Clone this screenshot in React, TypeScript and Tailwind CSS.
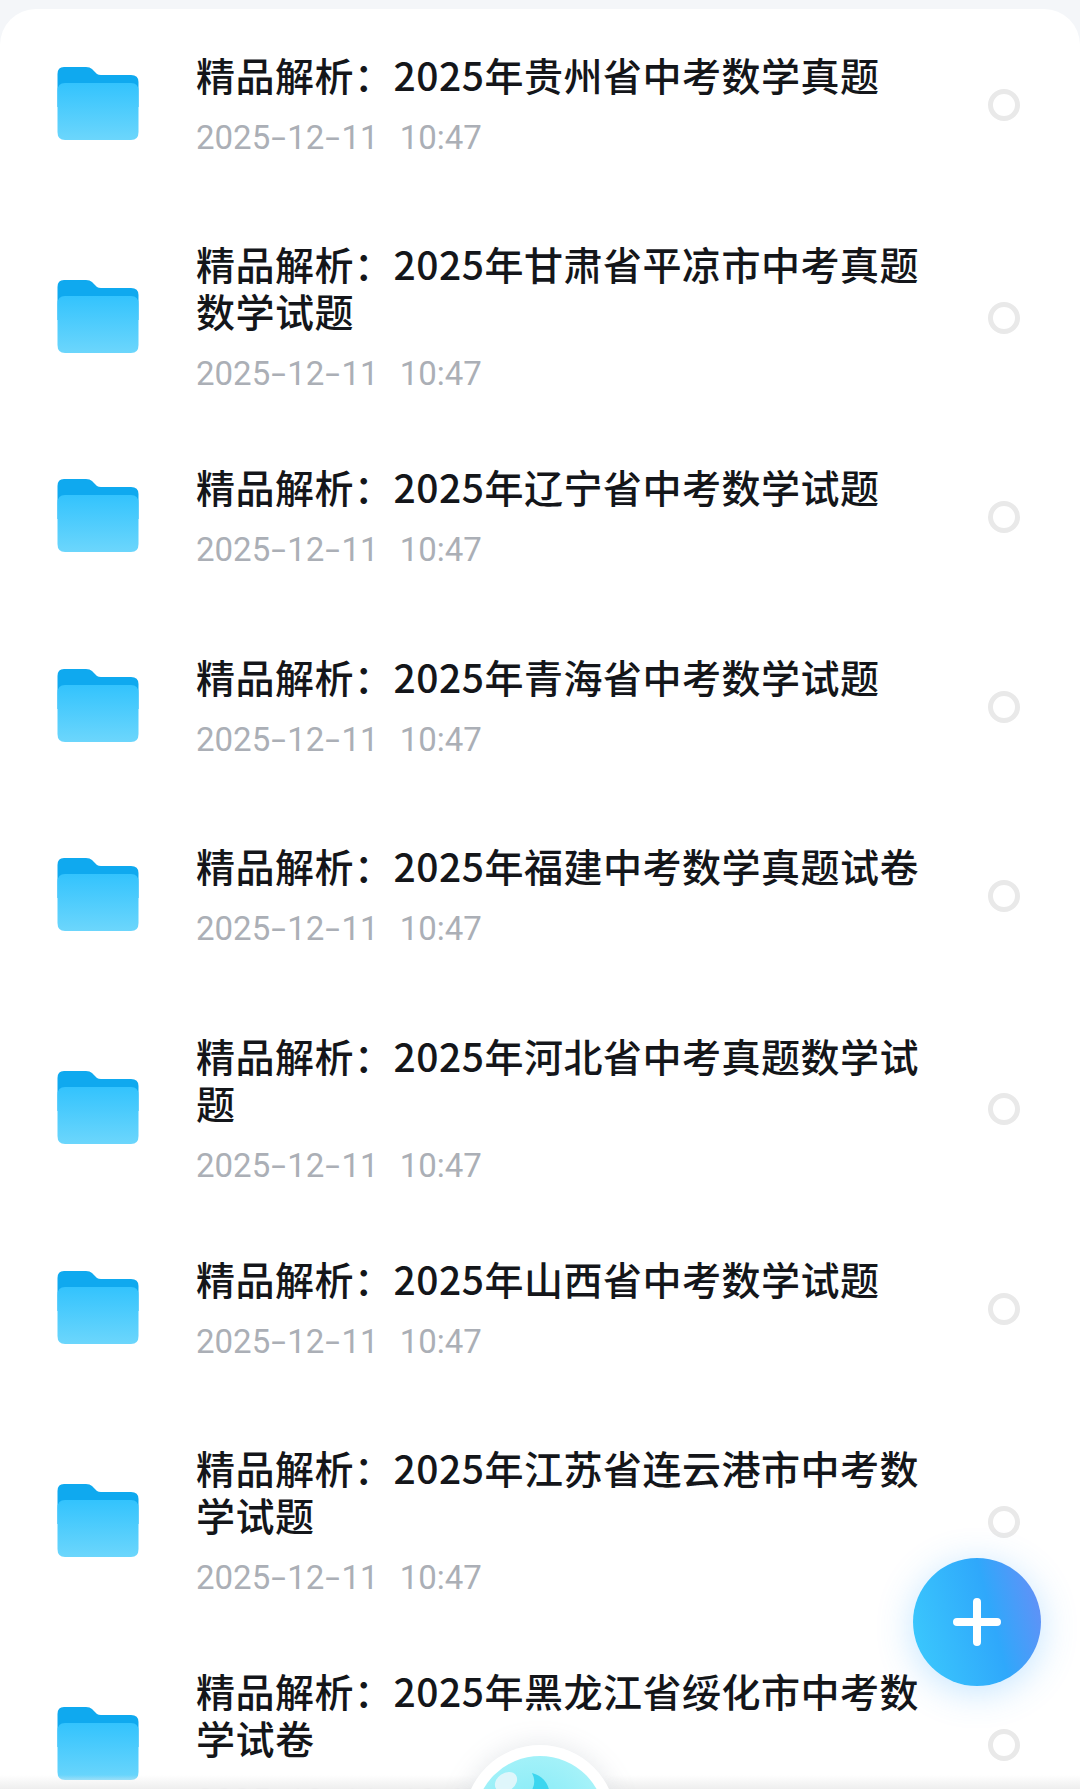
import React from "react";

const font = { fontFamily: '"Noto Sans CJK SC", sans-serif' };

const rows = [
  "精品解析\uFF1A2025年贵州省中考数学真题",
  "精品解析\uFF1A2025年甘肃省平凉市中考真题数学试题",
  "精品解析\uFF1A2025年辽宁省中考数学试题",
  "精品解析\uFF1A2025年青海省中考数学试题",
  "精品解析\uFF1A2025年福建中考数学真题试卷",
  "精品解析\uFF1A2025年河北省中考真题数学试题",
  "精品解析\uFF1A2025年山西省中考数学试题",
  "精品解析\uFF1A2025年江苏省连云港市中考数学试题",
  "精品解析\uFF1A2025年黑龙江省绥化市中考数学试卷",
];

function Folder() {
  return (
    <svg width="82" height="73" viewBox="0 0 82 73" className="mt-[-1px] shrink-0">
      <defs>
        <linearGradient id="folderFront" x1="0" y1="0" x2="0" y2="1">
          <stop offset="0" stopColor="#33c3fd" />
          <stop offset="1" stopColor="#6cd6fc" />
        </linearGradient>
      </defs>
      <path
        d="M7 0H29Q33 0 35 2L40 7Q41.500 8 44 8H74Q81.500 8 81.500 15V40H0.500V7Q0.500 0 7 0Z"
        fill="#0fa9ef"
      />
      <path
        d="M8 16H74Q81.500 16 81.500 24V65Q81.500 73 74 73H8Q0.500 73 0.500 65V24Q0.500 16 8 16Z"
        fill="url(#folderFront)"
      />
    </svg>
  );
}

function Dash() {
  return <span className="mx-[4px] inline-block scale-x-[1.6]">-</span>;
}

function Row({ title }: { title: string }) {
  return (
    <div className="flex min-h-[189.5px] items-start pt-[35.5px] pb-[36.5px] pl-[57px] pr-[60px]">
      <div className="flex w-full items-center">
        <Folder />
        <div className="ml-[57px] w-[730px] shrink-0">
          <div
            lang="zh-CN"
            className="mt-[-1px] text-[39px] font-medium leading-[47px] tracking-[0.5px] text-[#14161a]"
            style={font}
          >
            {title}
          </div>
          <div className="mt-[22px] whitespace-pre font-['Roboto',sans-serif] text-[33px] leading-[36px] text-[#abafb6]">
            2025
            <Dash />
            12
            <Dash />
            11
            <span className="ml-[21px]">10:47</span>
          </div>
        </div>
        <div className="mt-[2px] ml-auto size-[32px] shrink-0 rounded-full border-[5px] border-[#e9e9e9]" />
      </div>
    </div>
  );
}

export default function App() {
  return (
    <div className="relative h-[1789px] w-[1080px] overflow-hidden bg-[#f4f6f9] pt-[9px]">
      <div className="h-[1780px] overflow-hidden rounded-t-[36px] bg-white pt-[7px]">
        {rows.map((title, i) => (
          <Row key={i} title={title} />
        ))}
      </div>

      {/* add button */}
      <button className="absolute left-[913px] top-[1558px] flex size-[128px] items-center justify-center rounded-full bg-[linear-gradient(75deg,#3ccbfd_0%,#2fa8fb_60%,#6c8cf6_100%)] shadow-[0_6px_36px_rgba(60,170,255,0.3)]">
        <svg width="48" height="48" viewBox="0 0 48 48">
          <path d="M24 4V44M4 24H44" stroke="#fff" strokeWidth="8" strokeLinecap="round" />
        </svg>
      </button>

      {/* bottom edge fade */}
      <div className="absolute bottom-0 left-0 h-[14px] w-full bg-gradient-to-b from-white/0 to-[#eeeeee]" />

      {/* floating assistant ball, mostly below the fold */}
      <div className="absolute left-[464px] top-[1745px] size-[152px] rounded-full bg-white shadow-[0_0_26px_rgba(225,228,232,0.9)]" />
      <svg width="140" height="34" viewBox="0 0 140 34" className="absolute left-[470px] top-[1755px]">
        <defs>
          <radialGradient id="ballBody" cx="0.45" cy="0.5" r="0.6">
            <stop offset="0" stopColor="#7de9f7" />
            <stop offset="1" stopColor="#aaf3f9" />
          </radialGradient>
        </defs>
        <circle cx="70" cy="66" r="65" fill="url(#ballBody)" />
        <path d="M62 18Q78 22 80 40L58 40Q68 30 62 18Z" fill="#3cd6ef" />
        <ellipse cx="36" cy="27" rx="12" ry="9" fill="#dff6fb" transform="rotate(-35 36 27)" />
      </svg>
    </div>
  );
}
